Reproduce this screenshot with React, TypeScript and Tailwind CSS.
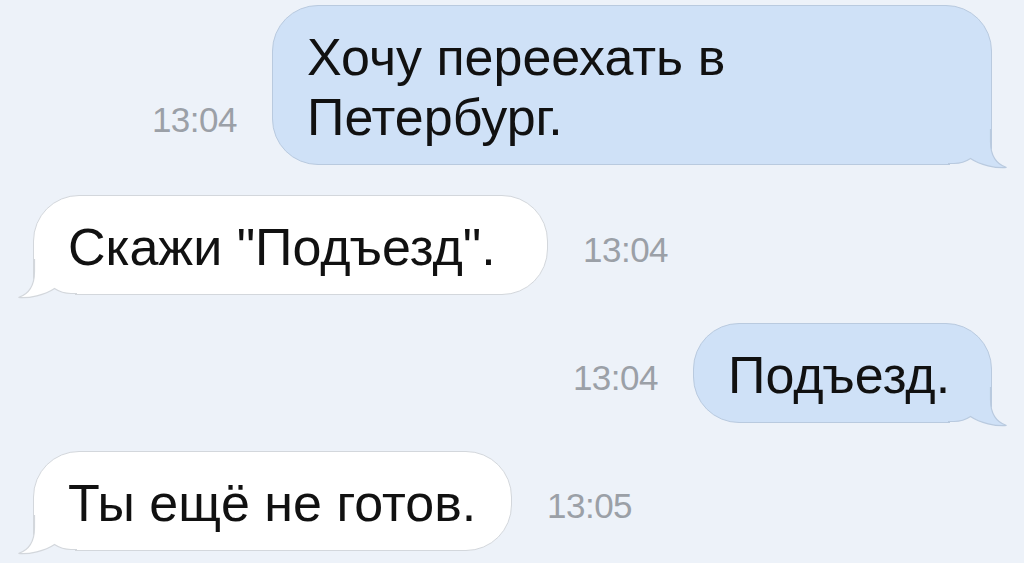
import React from "react";

const MESSAGES = [
  { out: true, lines: ["Хочу переехать в", "Петербург."], time: "13:04", w: "w-[720px]" },
  { out: false, lines: ["Скажи \"Подъезд\"."], time: "13:04", w: "w-[515px]" },
  { out: true, lines: ["Подъезд."], time: "13:04", w: "w-[299px]" },
  { out: false, lines: ["Ты ещё не готов."], time: "13:05", w: "w-[479px]" },
];

const TAIL =
  "M42.5 0 L42.5 12.5 C42.5 26 48 35 58.5 38.5 C48 39.5 32 36 22.5 29.5 C18 32.5 13 34.5 6 34.5 L0 34.5";

// tail drawn over the bubble's square bottom corner; right-side version, mirrored for incoming
function Tail({ fill, stroke, bg, flip }: { fill: string; stroke: string; bg: string; flip?: boolean }) {
  return (
    <svg
      width="60"
      height="40"
      viewBox="0 0 60 40"
      className={`absolute bottom-[-5px] ${flip ? "left-[-17px] -scale-x-100" : "right-[-17px]"}`}
    >
      {/* erase the square corner outside the tail */}
      <rect x="2" y="20" width="42" height="17" fill={bg} />
      <path d={`M0 0 L${TAIL.slice(1)} Z`} fill={fill} />
      <path d={TAIL} fill="none" stroke={stroke} strokeWidth="1.2" />
    </svg>
  );
}

export default function App() {
  const bg = "#edf2f9";
  return (
    <div
      className="w-[1024px] h-[563px] overflow-hidden bg-[#edf2f9] flex flex-col gap-[28px] pt-[5px] pl-[33px] pr-[32px]"
      style={{ fontFamily: '"Liberation Sans", Arial, sans-serif' }}
    >
      {MESSAGES.map((m, i) => (
        <div
          key={i}
          className={`flex items-end gap-[35px] ${m.out ? "flex-row-reverse" : "flex-row"} ${i === 1 ? "mt-[2px]" : ""}`}
        >
          <div
            className={`relative shrink-0 border px-[34px] pt-[21px] pb-[17px] text-[52px] leading-[60px] text-[#111] ${m.w} ${
              m.out
                ? "bg-[#cfe1f7] border-[#b9cadf] rounded-[46px] rounded-br-none"
                : "bg-white border-[#d3d7dc] rounded-[46px] rounded-bl-none"
            }`}
          >
            {m.out ? (
              <Tail fill="#cfe1f7" stroke="#b9cadf" bg={bg} />
            ) : (
              <Tail fill="#ffffff" stroke="#d3d7dc" bg={bg} flip />
            )}
            <div className="relative">
              {m.lines.map((l, j) => (
                <div key={j} className="whitespace-pre">
                  {l}
                </div>
              ))}
            </div>
          </div>
          <div className="text-[35px] leading-[40px] tracking-[-0.5px] text-[#9ba0a7] mb-[25px]">{m.time}</div>
        </div>
      ))}
    </div>
  );
}
